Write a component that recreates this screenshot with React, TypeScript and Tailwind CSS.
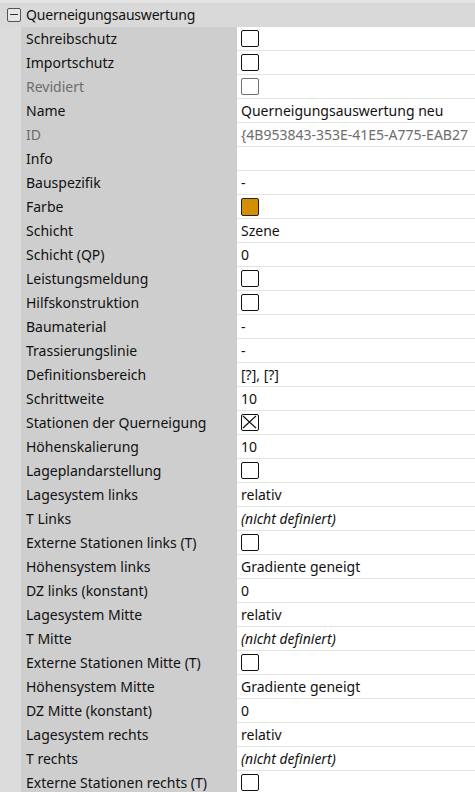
import React from 'react';

type Kind = 'text' | 'check' | 'checked' | 'checkGray' | 'color' | 'italic' | 'gray' | 'empty';

interface Row {
  label: string;
  value?: string;
  kind: Kind;
  dim?: boolean;
}

const rows: Row[] = [
  { label: 'Schreibschutz', kind: 'check' },
  { label: 'Importschutz', kind: 'check' },
  { label: 'Revidiert', kind: 'checkGray', dim: true },
  { label: 'Name', value: 'Querneigungsauswertung neu', kind: 'text' },
  { label: 'ID', value: '{4B953843-353E-41E5-A775-EAB27', kind: 'gray', dim: true },
  { label: 'Info', kind: 'empty' },
  { label: 'Bauspezifik', value: '-', kind: 'text' },
  { label: 'Farbe', kind: 'color' },
  { label: 'Schicht', value: 'Szene', kind: 'text' },
  { label: 'Schicht (QP)', value: '0', kind: 'text' },
  { label: 'Leistungsmeldung', kind: 'check' },
  { label: 'Hilfskonstruktion', kind: 'check' },
  { label: 'Baumaterial', value: '-', kind: 'text' },
  { label: 'Trassierungslinie', value: '-', kind: 'text' },
  { label: 'Definitionsbereich', value: '[?], [?]', kind: 'text' },
  { label: 'Schrittweite', value: '10', kind: 'text' },
  { label: 'Stationen der Querneigung', kind: 'checked' },
  { label: 'Höhenskalierung', value: '10', kind: 'text' },
  { label: 'Lageplandarstellung', kind: 'check' },
  { label: 'Lagesystem links', value: 'relativ', kind: 'text' },
  { label: 'T Links', value: '(nicht definiert)', kind: 'italic' },
  { label: 'Externe Stationen links (T)', kind: 'check' },
  { label: 'Höhensystem links', value: 'Gradiente geneigt', kind: 'text' },
  { label: 'DZ links (konstant)', value: '0', kind: 'text' },
  { label: 'Lagesystem Mitte', value: 'relativ', kind: 'text' },
  { label: 'T Mitte', value: '(nicht definiert)', kind: 'italic' },
  { label: 'Externe Stationen Mitte (T)', kind: 'check' },
  { label: 'Höhensystem Mitte', value: 'Gradiente geneigt', kind: 'text' },
  { label: 'DZ Mitte (konstant)', value: '0', kind: 'text' },
  { label: 'Lagesystem rechts', value: 'relativ', kind: 'text' },
  { label: 'T rechts', value: '(nicht definiert)', kind: 'italic' },
  { label: 'Externe Stationen rechts (T)', kind: 'check' },
];

const Box: React.FC<{ gray?: boolean; checked?: boolean }> = ({ gray, checked }) => (
  <div
    className={`w-[18px] h-[17px] rounded-[2px] border-[1.5px] bg-white relative ${gray ? 'border-[#707070]' : 'border-[#111]'}`}
  >
    {checked && (
      <svg className="absolute inset-0" width="15" height="14" viewBox="0 0 15 14">
        <path d="M1 1 L14 13 M14 1 L1 13" stroke="#111" strokeWidth="1.2" />
      </svg>
    )}
  </div>
);

const Value: React.FC<{ row: Row }> = ({ row }) => {
  switch (row.kind) {
    case 'check':
      return <Box />;
    case 'checkGray':
      return <Box gray />;
    case 'checked':
      return <Box checked />;
    case 'color':
      return <div className="w-[18px] h-[18px] rounded-[2px] border border-[#222] bg-[#d48f00]" />;
    case 'italic':
      return <span className="italic">{row.value}</span>;
    case 'gray':
      return <span className="text-[#6d6d6d]">{row.value}</span>;
    case 'empty':
      return null;
    default:
      return <span>{row.value}</span>;
  }
};

export default function App() {
  return (
    <div
      className="w-[475px] h-[792px] overflow-hidden bg-[#e3e3e3] pt-[3px] text-[14px] text-[#111] whitespace-nowrap"
      style={{ fontFamily: '"Noto Sans", "Open Sans", sans-serif' }}
    >
      <div className="flex items-center h-[24px] bg-[#d9d9d9] pb-[1px]">
        <div className="ml-[7px] w-[14px] h-[14px] border border-[#555] rounded-[2px] flex items-center justify-center bg-[#e6e6e6]">
          <div className="w-[8px] h-[1.5px] bg-[#333]" />
        </div>
        <span className="ml-[5px] tracking-[-0.2px]">Querneigungsauswertung</span>
      </div>
      {rows.map((row) => (
        <div key={row.label} className="flex h-[24px]">
          <div className="w-[21px] bg-[#dcdcdc]" />
          <div
            className={`w-[216px] bg-[#cecece] pl-[5px] pb-[1px] flex items-center ${row.dim ? 'text-[#6d6d6d]' : ''}`}
          >
            {row.label}
          </div>
          <div className="flex-1 bg-white border-b border-[#e3e3e3] pl-[4px] flex items-center overflow-hidden">
            <Value row={row} />
          </div>
        </div>
      ))}
    </div>
  );
}
